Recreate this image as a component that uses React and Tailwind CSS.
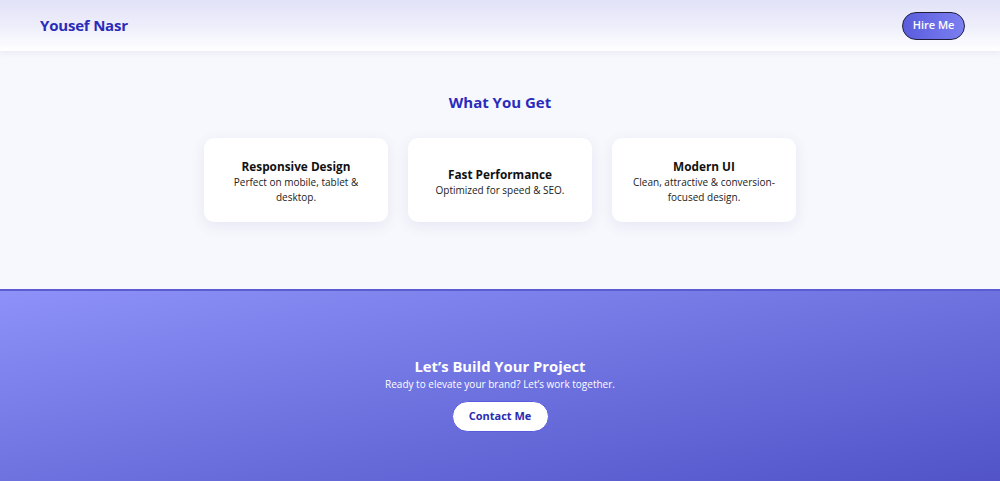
import React from "react";

const features = [
  { title: "Responsive Design", text: "Perfect on mobile, tablet & desktop." },
  { title: "Fast Performance", text: "Optimized for speed & SEO." },
  { title: "Modern UI", text: "Clean, attractive & conversion-focused design." },
];

const App = () => {
  return (
    <div className="min-h-[481px] bg-[#f7f8fd] font-['Open_Sans','Noto_Sans',sans-serif]">
      {/* Header */}
      <header className="h-[51px] flex items-center justify-between pl-10 pr-[35px] bg-gradient-to-b from-[#e2e2f8] via-[#eeeefb] to-white shadow-[0_2px_6px_rgba(60,60,140,0.08)]">
        <h1 className="text-[15px] font-bold text-[#2a2bb8] tracking-[-0.2px]">Yousef Nasr</h1>
        <button className="h-[28px] w-[63px] rounded-full border-[1.5px] border-[#1f1f3a] bg-gradient-to-r from-[#5a5cdc] to-[#7c7ff0] text-[11px] font-semibold text-white">
          Hire Me
        </button>
      </header>

      {/* Features */}
      <section className="h-[238px] flex flex-col items-center pt-[40px]">
        <h2 className="text-[15px] font-bold text-[#2a2bbd] leading-[22px]">What You Get</h2>
        <div className="mt-[25px] flex gap-5">
          {features.map((f) => (
            <div
              key={f.title}
              className="w-[184px] h-[84px] bg-white rounded-[10px] shadow-[0_4px_14px_rgba(80,80,150,0.10)] flex flex-col items-center justify-center px-4 text-center"
            >
              <h3 className="text-[11.8px] font-bold text-[#111] leading-[17px] mt-[3px]">{f.title}</h3>
              <p className="text-[10px] text-[#222] leading-[15px]">{f.text}</p>
            </div>
          ))}
        </div>
      </section>

      {/* Call to action */}
      <section className="h-[192px] border-t-2 border-[#5a5cd0] bg-gradient-to-br from-[#8d91f8] to-[#5153c7] flex flex-col items-center pt-[64px]">
        <h2 className="text-[14.8px] font-bold text-white leading-[22px]">Let’s Build Your Project</h2>
        <p className="text-[10px] text-white leading-[14px]">Ready to elevate your brand? Let’s work together.</p>
        <button className="mt-[10px] h-[31px] w-[97px] rounded-full bg-white border border-[#5a5ce0] text-[11px] font-bold text-[#2a2bb0]">
          Contact Me
        </button>
      </section>
    </div>
  );
};

export default App;
